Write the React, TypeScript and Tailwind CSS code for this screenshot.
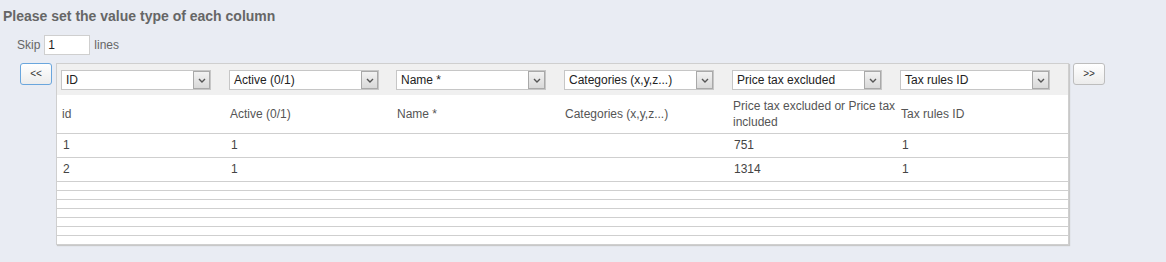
import React from "react";

const columns = [
  { value: "ID", label: "id", w: 168 },
  { value: "Active (0/1)", label: "Active (0/1)", w: 167 },
  { value: "Name *", label: "Name *", w: 168 },
  { value: "Categories (x,y,z...)", label: "Categories (x,y,z...)", w: 168 },
  { value: "Price tax excluded", label: "Price tax excluded or Price tax included", w: 168 },
  { value: "Tax rules ID", label: "Tax rules ID", w: 172 },
];

const rows = [
  ["1", "1", "", "", "751", "1"],
  ["2", "1", "", "", "1314", "1"],
];

const FakeSelect = ({ value }: { value: string }) => (
  <div className="flex h-[20px] w-[150px] items-stretch border border-[#c6c6c6] bg-white">
    <span className="flex-1 truncate pl-[4px] text-[12px] leading-[18px] text-[#222]">{value}</span>
    <span className="flex w-[17px] items-center justify-center border border-[#a9a9a9] bg-gradient-to-b from-[#f2f2f2] to-[#d9d9d9]">
      <svg width="8" height="5" viewBox="0 0 8 5">
        <path d="M1 1 L4 4 L7 1" fill="none" stroke="#555" strokeWidth="1.4" />
      </svg>
    </span>
  </div>
);

const NavButton = ({ label, blue }: { label: string; blue?: boolean }) => (
  <button
    className={
      "h-[22px] w-[32px] rounded-[3px] border bg-gradient-to-b from-white to-[#ececec] text-[10px] leading-[14px] text-[#333] " +
      (blue ? "border-[#6aa6dd]" : "border-[#bdbdbd]")
    }
  >
    {label}
  </button>
);

export default function App() {
  return (
    <div className="h-[262px] bg-[#e9ecf3] font-['Liberation_Sans',Arial,sans-serif]">
      <h2 className="pl-[3px] pt-[8px] text-[14px] font-bold leading-[16px] text-[#666]">
        Please set the value type of each column
      </h2>

      <div className="mt-[11px] flex items-center gap-[4px] pl-[17px] text-[12px] text-[#666]">
        <span>Skip</span>
        <input
          defaultValue="1"
          className="h-[20px] w-[46px] border border-[#cfcfcf] bg-white px-[3px] text-[12px] text-[#222] outline-none"
        />
        <span>lines</span>
      </div>

      <div className="mt-[8px] flex items-start gap-[4px] pl-[20px]">
        <NavButton label="<<" blue />
        <div className="border border-[#cfcfcf] bg-white shadow-[1px_1px_1px_#c8c8c8]">
          <table className="w-[1011px] table-fixed border-collapse text-[12px] text-[#444]">
            <colgroup>
              {columns.map((c) => (
                <col key={c.value} style={{ width: c.w }} />
              ))}
            </colgroup>
            <thead>
              <tr className="h-[31px] bg-[#f0f0f0]">
                {columns.map((c) => (
                  <th key={c.value} className="pl-[4px] pt-[1px] text-left align-middle font-normal">
                    <FakeSelect value={c.value} />
                  </th>
                ))}
              </tr>
              <tr className="h-[38px] border-b border-[#cfcfcf]">
                {columns.map((c) => (
                  <td key={c.label} className="pl-[5px] align-middle leading-[16px] text-[#555]">
                    {c.label}
                  </td>
                ))}
              </tr>
            </thead>
            <tbody>
              {rows.map((r, i) => (
                <tr key={i} className="h-[24px] border-b border-[#cfcfcf]">
                  {r.map((v, j) => (
                    <td key={j} className="pl-[6px] align-middle leading-[16px]">
                      {v}
                    </td>
                  ))}
                </tr>
              ))}
              {Array.from({ length: 7 }).map((_, i) => (
                <tr key={"e" + i} className="h-[9px] border-b border-[#cfcfcf] last:border-b-0">
                  <td colSpan={6} />
                </tr>
              ))}
            </tbody>
          </table>
        </div>
        <NavButton label=">>" />
      </div>
    </div>
  );
}
